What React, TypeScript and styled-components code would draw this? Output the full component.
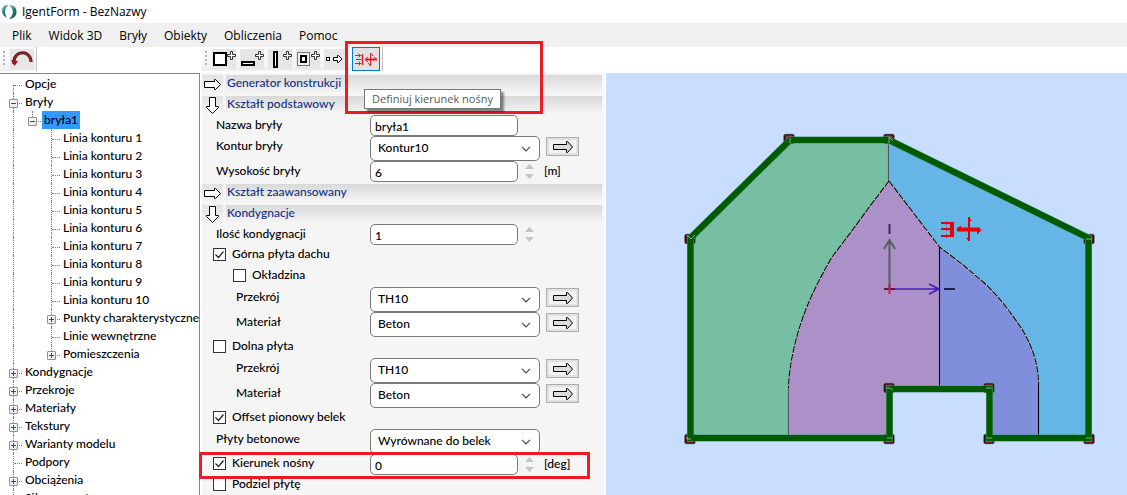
import React from "react";
import styled, { createGlobalStyle, css } from "styled-components";

const Global = createGlobalStyle`
  * { box-sizing: border-box; }
  body { margin: 0; background: #fff; overflow: hidden; }
  button, input, select { font: inherit; color: inherit; }
`;

const Window = styled.div`
  display: flex;
  flex-direction: column;
  height: 100vh;
  font-family: Lato, "Liberation Sans", sans-serif;
  font-size: 12px;
  font-weight: 500;
  color: #000;
`;

const TitleBar = styled.header`
  display: flex;
  align-items: center;
  gap: 5px;
  flex: none;
  height: 23px;
  padding-left: 1px;
  font-family: "Open Sans", "Noto Sans", sans-serif;
  font-size: 12px;
  font-weight: 400;
`;

const MenuBar = styled.nav`
  display: flex;
  gap: 17px;
  align-items: center;
  flex: none;
  height: 24px;
  padding-left: 12px;
  background: #f0f0f0;
  font-family: "Open Sans", "Noto Sans", sans-serif;
  font-size: 12px;
  font-weight: 400;
`;

const MenuItem = styled.button`
  padding: 0;
  border: 0;
  background: none;
`;

const ToolRow = styled.div`
  display: grid;
  grid-template-columns: 202px 1fr;
  flex: none;
  height: 26px;
`;

const Toolbar = styled.div`
  position: relative;
  display: flex;
  align-items: center;
  justify-self: start;
  gap: 4px;
  height: 24px;
  padding: 0 2px 0 3px;
  background: linear-gradient(#fdfdfd, #efefef);
  border-right: 1px solid #c4c4c4;
`;

const Grip = styled.span`
  width: 2px;
  height: 16px;
  margin-right: 1px;
  background: repeating-linear-gradient(#b4b4b4 0 2px, transparent 2px 4px);
`;

const ToolButton = styled.button<{ $active?: boolean }>`
  display: flex;
  align-items: center;
  justify-content: center;
  width: 24px;
  height: 20px;
  padding: 0;
  border: 0;
  background: #e6e6e6;
  ${(p) =>
    p.$active &&
    css`
      width: 28px;
      height: 24px;
      border: 1px solid #0078d7;
      background: #e1e1e1;
    `}
`;

const Tooltip = styled.div`
  position: absolute;
  z-index: 3;
  top: 42px;
  left: 162px;
  padding: 0 7px;
  border: 1px solid #767676;
  background: #fff;
  box-shadow: 3px 3px 2px rgba(0, 0, 0, 0.45);
  color: #575757;
  font: 11px/18px "Open Sans", "Noto Sans", sans-serif;
  white-space: nowrap;
`;

const Highlight = styled.div<{ $area: "tool" | "row" }>`
  position: absolute;
  z-index: 2;
  border: 3px solid #ed1c24;
  pointer-events: none;
  ${(p) =>
    p.$area === "tool"
      ? css`
          top: -6px;
          left: 143px;
          width: 198px;
          height: 73px;
        `
      : css`
          top: -2px;
          left: -3px;
          width: 391px;
          height: 27px;
        `}
`;

const Workspace = styled.main`
  display: grid;
  grid-template-columns: 200px 402px 1fr;
  grid-template-rows: minmax(0, 1fr);
  column-gap: 2px;
  flex: 1;
  min-height: 0;
  overflow: hidden;
`;

const Tree = styled.ul`
  margin: 0;
  padding: 1px 0 0 6px;
  list-style: none;
  border-top: 1px solid #828790;
  border-right: 1px solid #828790;
  overflow: hidden;
`;

const TreeRow = styled.li`
  display: flex;
  height: 18px;
  line-height: 17px;
  white-space: nowrap;
`;

const Guide = styled.span<{ $v: "full" | "top" | "bottom" | "none"; $branch?: boolean }>`
  position: relative;
  display: flex;
  align-items: center;
  flex: none;
  width: 19px;
  padding-left: 3px;
  &::before {
    content: "";
    position: absolute;
    left: 7px;
    top: ${(p) => (p.$v === "bottom" ? "10px" : "0")};
    bottom: ${(p) => (p.$v === "top" ? "8px" : "0")};
    border-left: ${(p) => (p.$v === "none" ? "0" : "1px dotted #808080")};
  }
  &::after {
    content: "";
    position: absolute;
    left: 8px;
    top: 10px;
    width: 8px;
    border-top: ${(p) => (p.$branch ? "1px dotted #808080" : "0")};
  }
`;

const Expander = styled.button`
  position: relative;
  z-index: 1;
  display: flex;
  width: 9px;
  height: 9px;
  margin-top: 3px;
  padding: 0;
  border: 1px solid #919191;
  border-radius: 1px;
  background: linear-gradient(135deg, #fff, #e4e4e4);
`;

const TreeLabel = styled.span<{ $selected?: boolean }>`
  ${(p) =>
    p.$selected &&
    css`
      margin-left: -2px;
      padding: 0 2px;
      background: #3399ff;
    `}
`;

const Panel = styled.form`
  padding-right: 2px;
  background: #f5f5f5;
`;

const Section = styled.div`
  display: flex;
  gap: 3px;
  height: 21px;
  padding-top: 2px;
`;

const SectionButton = styled.button`
  display: flex;
  align-items: center;
  justify-content: center;
  width: 21px;
  height: 18px;
  padding: 0;
  border: 0;
  background: linear-gradient(#e2e2e2, #f4f4f4);
`;

const SectionTitle = styled.h2`
  flex: 1;
  height: 18px;
  margin: 0;
  padding-left: 1px;
  background: linear-gradient(#d9d9d9, #f5f5f5);
  color: #0f3187;
  font-size: 12px;
  font-weight: 500;
  line-height: 16px;
`;

const Row = styled.div<{ $tall?: boolean }>`
  position: relative;
  display: grid;
  grid-template-columns: 168px 170px 1fr;
  height: ${(p) => (p.$tall ? "25px" : "21px")};
`;

const Label = styled.label<{ $indent?: boolean }>`
  padding-left: ${(p) => (p.$indent ? "34px" : "14px")};
  line-height: 20px;
`;

const CheckLabel = styled.label<{ $indent?: boolean }>`
  display: flex;
  align-items: flex-start;
  gap: 6px;
  padding-left: ${(p) => (p.$indent ? "31px" : "11px")};
  line-height: 18px;
  white-space: nowrap;
`;

const Check = styled.span`
  display: grid;
  width: 13px;
  height: 13px;
  margin-top: 3px;
  > * { grid-area: 1 / 1; }
  svg { visibility: hidden; pointer-events: none; }
  input:checked + svg { visibility: visible; }
`;

const CheckInput = styled.input`
  appearance: none;
  width: 13px;
  height: 13px;
  margin: 0;
  border: 1px solid #333;
  background: #fff;
`;

const NumberBox = styled.div`
  display: flex;
  align-items: center;
  gap: 7px;
`;

const TextInput = styled.input`
  width: 148px;
  height: 21px;
  padding: 2px 4px 0;
  border: 1px solid #7a7a7a;
  border-radius: 5px;
  background: #fff;
`;

const Spinner = styled.span`
  display: flex;
  flex-direction: column;
  gap: 5px;
`;

const SpinButton = styled.button`
  display: flex;
  padding: 0;
  border: 0;
  background: none;
`;

const Unit = styled.span`
  padding-left: 4px;
  line-height: 20px;
`;

const SelectBox = styled.div`
  display: grid;
  align-items: center;
  > * { grid-area: 1 / 1; }
  svg { justify-self: end; margin-right: 9px; pointer-events: none; }
`;

const Select = styled.select`
  appearance: none;
  width: 170px;
  height: 25px;
  padding: 0 24px 2px 7px;
  border: 1px solid #7a7a7a;
  border-radius: 5px;
  background: #fff;
`;

const GoButton = styled.button`
  display: flex;
  align-items: center;
  justify-content: center;
  width: 33px;
  height: 19px;
  margin: 1px 0 0 6px;
  padding: 0;
  border: 1px solid #adadad;
  background: #f2f2f2;
  box-shadow: inset 0 0 0 2px #e1e1e1;
`;

const Viewport = styled.section`
  display: flex;
  align-items: center;
  justify-content: center;
  background: #c9ddff;
  overflow: hidden;
`;

const Plus = ({ x }: { x: number }) => (
  <path
    transform={`translate(${x} 2)`}
    d="M3.5 .5h2v3h3v2h-3v3h-2v-3h-3v-2h3z"
    fill="#fff"
    stroke="#333"
  />
);

const BlockArrow = ({ fill = "#fff" }: { fill?: string }) => (
  <svg width="20" height="12" viewBox="0 0 20 12">
    <path d="M.5 3.5h13v-3h1l5 5.5-5 5.5h-1v-3H.5z" fill={fill} stroke="#000" />
  </svg>
);

const HeaderArrow = ({ open }: { open: boolean }) =>
  open ? (
    <svg width="13" height="17" viewBox="0 0 13 17">
      <path d="M3.5.5h6v9h3v1l-6 6-6-6v-1h3z" fill="#fff" stroke="#000" />
    </svg>
  ) : (
    <svg width="17" height="11" viewBox="0 0 17 11">
      <path d="M.5 2.5h10v-2h1l5 5-5 5h-1v-2H.5z" fill="#fff" stroke="#000" />
    </svg>
  );

const LoadShape = () => (
  <g fill="#e80000" stroke="#e80000">
    <path d="M1 7h9M1 13h9M1 20h9" strokeWidth="2" />
    <path d="M6 5l3 2-3 2zM6 11l3 2-3 2zM6 18l3 2-3 2z" stroke="none" />
    <path d="M12 6v15" strokeWidth="4" />
    <path d="M17 13.500h23" strokeWidth="4" />
    <path d="M29 1v24" strokeWidth="2" />
    <path d="M16 13.500l5-4v4zM42 13.500l-5 5v-5zM29 1l3 4h-3zM29 25l-3-3h3z" stroke="none" />
  </g>
);

const LoadGlyph = () => (
  <svg width="24" height="15" viewBox="0 0 24 15">
    <g fill="none" stroke="#e02020">
      <path d="M1 3.500h6M1 11.500h6M2 7.500h5" />
      <path d="M4.500 1.500l2 2-2 2M4.500 9.500l2 2-2 2" />
      <path d="M8.500 2v11" strokeWidth="1.6" />
      <path d="M11 7.500h12" strokeWidth="2" />
      <path d="M16.500 1v13" />
      <path d="M14 5l-3 2.500 3 2.500M20 5l3 2.500h-3M16.500 1l2.500 3M16.500 14l-2.500-3" />
    </g>
  </svg>
);

type Item = { text: string; level: number; mark?: "+" | "-"; last?: boolean; selected?: boolean };

const items: Item[] = [
  { text: "Opcje", level: 0 },
  { text: "Bryły", level: 0, mark: "-" },
  { text: "bryła1", level: 1, mark: "-", last: true, selected: true },
  ...Array.from({ length: 10 }, (_, i) => ({ text: `Linia konturu ${i + 1}`, level: 2 })),
  { text: "Punkty charakterystyczne", level: 2, mark: "+" },
  { text: "Linie wewnętrzne", level: 2 },
  { text: "Pomieszczenia", level: 2, mark: "+", last: true },
  { text: "Kondygnacje", level: 0, mark: "+" },
  { text: "Przekroje", level: 0, mark: "+" },
  { text: "Materiały", level: 0, mark: "+" },
  { text: "Tekstury", level: 0, mark: "+" },
  { text: "Warianty modelu", level: 0, mark: "+" },
  { text: "Podpory", level: 0 },
  { text: "Obciążenia", level: 0, mark: "+" },
  { text: "Siły wewnętrzne", level: 0 },
];

const TreeView = () => (
  <Tree>
    {items.map((it, i) => (
      <TreeRow key={it.text}>
        {it.level > 0 && <Guide $v="full" />}
        {it.level > 1 && <Guide $v="none" />}
        <Guide $v={i === 0 ? "bottom" : it.last ? "top" : "full"} $branch>
          {it.mark && (
            <Expander type="button" aria-label={it.text}>
              <svg width="7" height="7" viewBox="0 0 7 7">
                <path d={it.mark === "+" ? "M1 3.5h5M3.5 1v5" : "M1 3.5h5"} stroke="#2b4b9b" />
              </svg>
            </Expander>
          )}
        </Guide>
        <TreeLabel $selected={it.selected}>{it.text}</TreeLabel>
      </TreeRow>
    ))}
  </Tree>
);

const SectionHead = ({ title, open = false }: { title: string; open?: boolean }) => (
  <Section>
    <SectionButton type="button" aria-label={title}>
      <HeaderArrow open={open} />
    </SectionButton>
    <SectionTitle>{title}</SectionTitle>
  </Section>
);

const CheckField = ({ text, on, indent }: { text: string; on?: boolean; indent?: boolean }) => (
  <CheckLabel $indent={indent}>
    <Check>
      <CheckInput type="checkbox" defaultChecked={on} />
      <svg width="13" height="13" viewBox="0 0 13 13">
        <path d="M2.5 6.5l3 3 5-6" fill="none" stroke="#222" strokeWidth="1.2" />
      </svg>
    </Check>
    {text}
  </CheckLabel>
);

const NumberField = ({ id, value, label }: { id: string; value: string; label?: string }) => (
  <NumberBox>
    <TextInput id={id} defaultValue={value} aria-label={label} />
    <Spinner>
      <SpinButton type="button" aria-label="+">
        <svg width="9" height="5" viewBox="0 0 9 5"><path d="M0 5l4.500-5L9 5z" fill="#c3c3c3" /></svg>
      </SpinButton>
      <SpinButton type="button" aria-label="-">
        <svg width="9" height="5" viewBox="0 0 9 5"><path d="M0 0l4.500 5L9 0z" fill="#c3c3c3" /></svg>
      </SpinButton>
    </Spinner>
  </NumberBox>
);

const SelectRow = (p: { id: string; label: string; value: string; indent?: boolean; go?: boolean }) => (
  <Row $tall>
    <Label htmlFor={p.id} $indent={p.indent}>{p.label}</Label>
    <SelectBox>
      <Select id={p.id}>
        <option>{p.value}</option>
      </Select>
      <svg width="10" height="6" viewBox="0 0 10 6">
        <path d="M1 .8l4 4 4-4" fill="none" stroke="#444" strokeWidth="1.2" />
      </svg>
    </SelectBox>
    {p.go && (
      <GoButton type="button" aria-label={p.label}>
        <BlockArrow fill="#dcdcdc" />
      </GoButton>
    )}
  </Row>
);

const nodes = [
  [690, 239], [789, 139], [889, 139], [1089, 239], [1089, 439],
  [989, 439], [989, 388], [889, 388], [889, 439], [690, 439],
];

const outline = "M690.500 238L790 140H889L1088.500 238V438H989.500V389H889.500V438H690.500z";
const leftCurve = "L870 206L851 232L832 257C818 281 808 302 802 320C795 340 789 366 788.500 388";
const rightCurve = "L962 264L982 281C1000 297 1012 315 1022 329C1033 348 1039 366 1038.500 388";

const Plan = () => (
  <svg width="521" height="422" viewBox="606 73 521 422">
    <path d={outline} fill="#66b5e7" />
    <path d={`M690.500 238L790 140H888.500V181${leftCurve}V438H690.500z`} fill="#76bfa3" />
    <path d={`M889 181${leftCurve}V438H889.500V389H939.500V247z`} fill="#ac90c8" />
    <path d={`M939.500 247${rightCurve}V438H989.500V389H939.500z`} fill="#808fdb" />
    <g fill="none" stroke="#e6e6e6" strokeWidth="1.2">
      <path d={`M889 181${leftCurve}`} />
      <path d={`M889 181L939.500 247${rightCurve}`} />
    </g>
    <g fill="none" stroke="#000" strokeWidth="1.1">
      <path d={`M889 181${leftCurve}`} strokeDasharray="7 1" />
      <path d={`M889 181L939.500 247${rightCurve}`} strokeDasharray="7 1" />
      <path d="M939.500 247V387M1038.500 388V436" />
      <path d="M888.500 142V181M788.500 388V436" stroke="#555565" />
    </g>
    {nodes.map(([x, y]) => (
      <g key={`${x}-${y}`}>
        <rect x={x - 5.5} y={y - 5} width="11" height="10" rx="2" fill="#1a1216" stroke="#8a8f9c" strokeWidth=".6" />
        <rect x={x - 3.5} y={y - 3.5} width="7" height="7" fill="#a82a32" />
      </g>
    ))}
    <path d={outline} fill="none" stroke="#4f9a78" strokeWidth="7" />
    <path d={outline} fill="none" stroke="#005a00" strokeWidth="6" />
    <path
      d="M687 235l4 4 4-4M790 143v-5M889 143v-6l4 4M1086 239h6M687 437v2h4M886 388h4l3 2M986 388h6M887 438h5M987 438h5M1086 438h5"
      fill="none"
      stroke="#b4d6c8"
      strokeWidth=".7"
    />
    <g fill="none" strokeWidth="2">
      <path d="M889.500 289V240M884 249l5.500-9 5.500 9" stroke="#56605c" />
      <path d="M889 289h50M929 284l10 5-10 5" stroke="#4520b4" strokeWidth="1.6" />
      <path d="M889.500 224v10" stroke="#4a1f58" />
      <path d="M944 289h11" stroke="#1c1c58" />
      <path d="M884 289h11" stroke="#5a1848" />
      <path d="M889.500 284v10" stroke="#c02050" />
    </g>
    <g transform="translate(940 216)">
      <LoadShape />
    </g>
  </svg>
);

export default function App() {
  return (
    <Window>
      <Global />
      <TitleBar>
        <svg width="16" height="16" viewBox="0 0 16 16">
          <defs>
            <linearGradient id="ring" x1="0" y1="0" x2="1" y2="1">
              <stop offset="0" stopColor="#8fd3c0" />
              <stop offset=".5" stopColor="#1f7f78" />
              <stop offset="1" stopColor="#123f4a" />
            </linearGradient>
          </defs>
          <path d="M7 1C2 1 0 5 1 8.500 2 11.500 4 13 6 13.500 3.500 10.500 3 5 7 1z" fill="url(#ring)" />
          <path d="M8 1c5 0 8 3 7.500 7.500C15 12.500 12 15 8 15c4-3 6-9 0-14z" fill="url(#ring)" />
        </svg>
        <span>IgentForm - BezNazwy</span>
      </TitleBar>
      <MenuBar>
        {["Plik", "Widok 3D", "Bryły", "Obiekty", "Obliczenia", "Pomoc"].map((m) => (
          <MenuItem key={m} type="button">{m}</MenuItem>
        ))}
      </MenuBar>
      <ToolRow>
        <Toolbar>
          <Grip />
          <ToolButton type="button" aria-label="Cofnij">
            <svg width="22" height="18" viewBox="0 0 22 18">
              <path d="M3 14C1 0 20-1 20 12" fill="none" stroke="#222" strokeWidth="3" />
              <path d="M3 14C1 0 20-1 20 12" fill="none" stroke="#c8141e" strokeWidth="1.4" />
              <path d="M0 10l3.500 6L7 11z" fill="#a3101a" />
            </svg>
          </ToolButton>
        </Toolbar>
        <Toolbar>
          <Grip />
          <ToolButton type="button" aria-label="Dodaj bryłę">
            <svg width="24" height="20">
              <rect x="2" y="4" width="12" height="12" fill="#fff" stroke="#000" strokeWidth="2" />
              <Plus x={15} />
            </svg>
          </ToolButton>
          <ToolButton type="button" aria-label="Dodaj płytę">
            <svg width="24" height="20">
              <rect x="2" y="13" width="12" height="3" fill="#fff" stroke="#000" strokeWidth="2" />
              <Plus x={15} />
            </svg>
          </ToolButton>
          <ToolButton type="button" aria-label="Dodaj ścianę">
            <svg width="24" height="20">
              <rect x="6" y="3" width="3" height="15" fill="#fff" stroke="#000" strokeWidth="2" />
              <Plus x={15} />
            </svg>
          </ToolButton>
          <ToolButton type="button" aria-label="Dodaj otwór">
            <svg width="24" height="20">
              <rect x="1.500" y="3.500" width="12" height="13" fill="#f0f0f0" stroke="#777" />
              <rect x="5" y="7" width="5" height="6" fill="#fff" stroke="#000" strokeWidth="2" />
              <Plus x={15} />
            </svg>
          </ToolButton>
          <ToolButton type="button" aria-label="Przesuń">
            <svg width="24" height="20">
              <rect x="2.500" y="8.500" width="3" height="3" fill="#fff" stroke="#000" />
              <path d="M9.500 8.500h4v-2h1l3.500 3.500-3.500 3.500h-1v-2h-4z" fill="#fff" stroke="#000" />
            </svg>
          </ToolButton>
          <ToolButton type="button" aria-label="Definiuj kierunek nośny" $active>
            <LoadGlyph />
          </ToolButton>
          <Tooltip role="tooltip">Definiuj kierunek nośny</Tooltip>
          <Highlight $area="tool" />
        </Toolbar>
      </ToolRow>
      <Workspace>
        <TreeView />
        <Panel>
          <SectionHead title="Generator konstrukcji" />
          <SectionHead title="Kształt podstawowy" open />
          <Row>
            <Label htmlFor="name">Nazwa bryły</Label>
            <TextInput id="name" defaultValue="bryła1" />
          </Row>
          <SelectRow id="contour" label="Kontur bryły" value="Kontur10" go />
          <Row>
            <Label htmlFor="height">Wysokość bryły</Label>
            <NumberField id="height" value="6" />
            <Unit>[m]</Unit>
          </Row>
          <SectionHead title="Kształt zaawansowany" />
          <SectionHead title="Kondygnacje" open />
          <Row>
            <Label htmlFor="floors">Ilość kondygnacji</Label>
            <NumberField id="floors" value="1" />
          </Row>
          <Row><CheckField text="Górna płyta dachu" on /></Row>
          <Row><CheckField text="Okładzina" indent /></Row>
          <SelectRow id="top-section" label="Przekrój" value="TH10" indent go />
          <SelectRow id="top-material" label="Materiał" value="Beton" indent go />
          <Row><CheckField text="Dolna płyta" /></Row>
          <SelectRow id="bottom-section" label="Przekrój" value="TH10" indent go />
          <SelectRow id="bottom-material" label="Materiał" value="Beton" indent go />
          <Row><CheckField text="Offset pionowy belek" on /></Row>
          <SelectRow id="slabs" label="Płyty betonowe" value="Wyrównane do belek" />
          <Row>
            <CheckField text="Kierunek nośny" on />
            <NumberField id="direction" value="0" label="Kierunek nośny" />
            <Unit>[deg]</Unit>
            <Highlight $area="row" />
          </Row>
          <Row><CheckField text="Podziel płytę" /></Row>
        </Panel>
        <Viewport>
          <Plan />
        </Viewport>
      </Workspace>
    </Window>
  );
}
